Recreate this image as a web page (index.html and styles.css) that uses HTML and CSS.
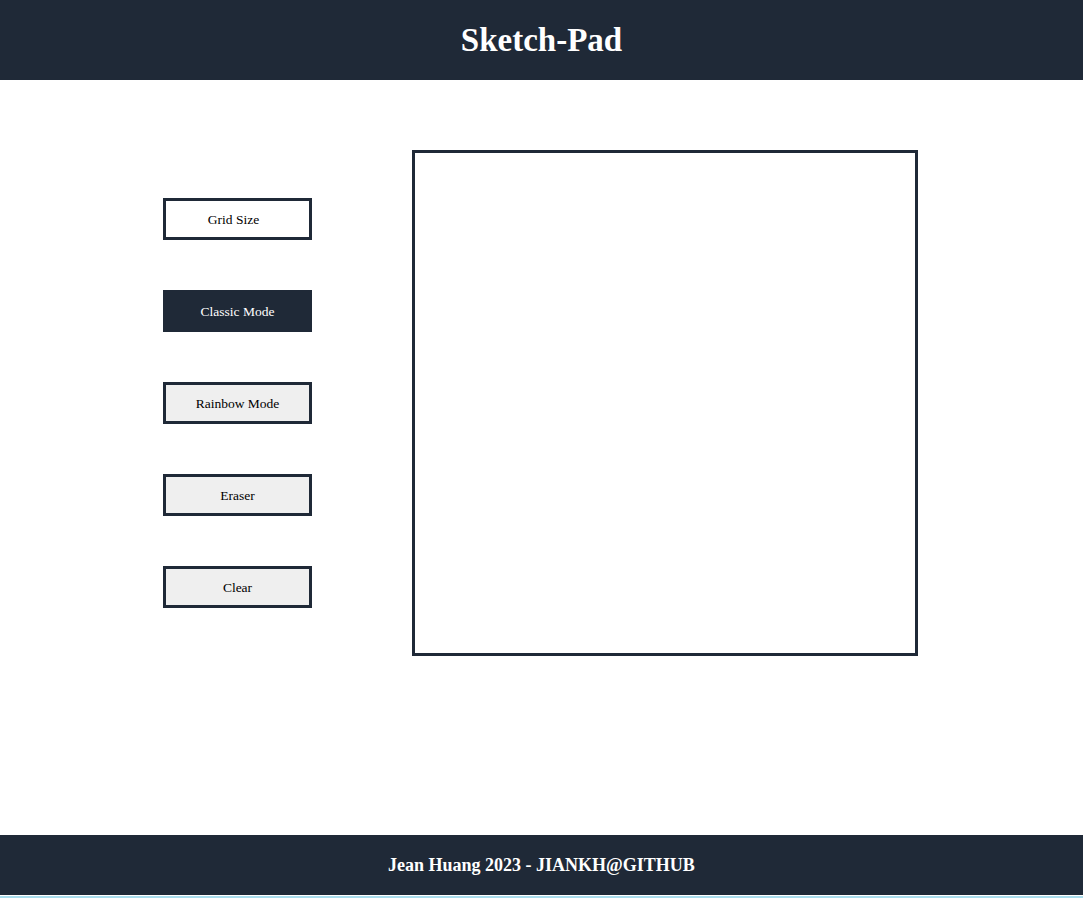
FILE: index.html
```html
<!DOCTYPE html>
<html lang="en">
<head>
<meta charset="utf-8">
<title>Sketch-Pad</title>
<link rel="stylesheet" href="styles.css">
</head>
<body>
<header class="header">
  <h1 class="title">Sketch-Pad</h1>
</header>
<main class="main">
  <div class="controls">
    <button class="btn btn-grid">Grid Size</button>
    <button class="btn btn-active">Classic Mode</button>
    <button class="btn">Rainbow Mode</button>
    <button class="btn">Eraser</button>
    <button class="btn">Clear</button>
  </div>
  <div class="canvas"></div>
</main>
<footer class="footer">Jean Huang 2023 - JIANKH@GITHUB</footer>
<div class="edge"></div>
</body>
</html>
```
FILE: styles.css
```css
html, body {
  margin: 0;
  padding: 0;
  background: #ffffff;
  font-family: "Liberation Serif", "Times New Roman", serif;
}

.header {
  height: 80px;
  background: #1f2937;
  display: flex;
  align-items: center;
  justify-content: center;
}

.title {
  margin: 0;
  color: #ffffff;
  font-size: 33px;
  font-weight: bold;
  line-height: 1;
}

.main {
  height: 755px;
  box-sizing: border-box;
  padding-top: 70px;
  padding-right: 2px;
  display: flex;
  justify-content: center;
  align-items: flex-start;
  gap: 100px;
}

.controls {
  margin-top: 48px;
  display: flex;
  flex-direction: column;
  gap: 50px;
}

.btn {
  width: 149px;
  height: 42px;
  box-sizing: border-box;
  border: 3px solid #1f2937;
  background: #efefef;
  color: #000000;
  font-family: "Liberation Serif", "Times New Roman", serif;
  font-size: 13.5px;
  padding: 1px 0 0 0;
  margin: 0;
}

.btn-grid {
  background: #ffffff;
  padding-right: 8px;
}

.btn-active {
  background: #1f2937;
  color: #ffffff;
}

.canvas {
  width: 506px;
  height: 506px;
  box-sizing: border-box;
  border: 3px solid #1f2937;
  background: #ffffff;
}

.footer {
  height: 60px;
  background: #1f2937;
  color: #ffffff;
  font-size: 18px;
  font-weight: bold;
  display: flex;
  align-items: center;
  justify-content: center;
  margin-bottom: 1px;
}

.edge {
  height: 2px;
  background: #a9dcec;
}
```
